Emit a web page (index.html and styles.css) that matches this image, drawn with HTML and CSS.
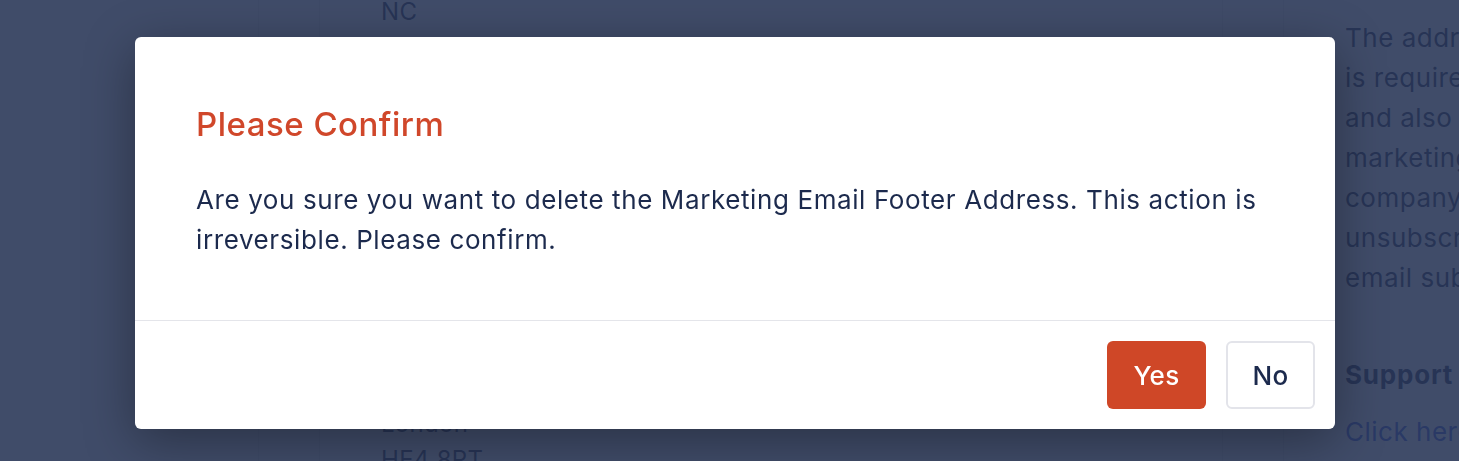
FILE: index.html
```html
<!DOCTYPE html>
<html lang="en">
<head>
<meta charset="utf-8">
<title>Please Confirm</title>
<link rel="stylesheet" href="styles.css">
</head>
<body>
<div class="page">
  <aside class="sidebar"></aside>
  <div class="gutter"></div>
  <main class="main">
    <div class="addr-top">NC</div>
    <div class="addr-bottom">
      <div>London</div>
      <div>HE4 8PT</div>
    </div>
  </main>
  <div class="gutter"></div>
  <aside class="help">
    <p class="help-text">
      <span>The address shown here</span>
      <span>is required by law</span>
      <span>and also appears in</span>
      <span>marketing emails as your</span>
      <span>company address with the</span>
      <span>unsubscribe link for your</span>
      <span>email subscribers.</span>
    </p>
    <h3 class="help-title">Support</h3>
    <a class="help-link" href="#">Click here to contact us</a>
  </aside>
</div>

<div class="backdrop"></div>

<div class="modal" role="dialog" aria-labelledby="modal-title">
  <div class="modal-body">
    <h2 class="modal-title" id="modal-title">Please Confirm</h2>
    <p class="modal-text">Are you sure you want to delete the Marketing Email Footer Address. This action is irreversible. Please confirm.</p>
  </div>
  <div class="modal-footer">
    <button class="btn btn-primary" type="button">Yes</button>
    <button class="btn btn-secondary" type="button">No</button>
  </div>
</div>
</body>
</html>
```

FILE: styles.css
```css
* {
  box-sizing: border-box;
}

html, body {
  margin: 0;
  padding: 0;
  height: 100%;
  overflow: hidden;
}

body {
  font-family: Inter, "Noto Sans", "Liberation Sans", sans-serif;
  color: #1c2a4d;
  background: #ffffff;
}

.page {
  display: grid;
  grid-template-columns: 258px 62px 902px 62px 1fr;
  height: 100vh;
}

.sidebar {
  background: #ffffff;
}

.gutter {
  background: #fafafb;
  border-left: 1px solid #e7e8ec;
  border-right: 1px solid #e7e8ec;
}

.main {
  padding: 0 61px;
  font-size: 24px;
  line-height: 36px;
  letter-spacing: 0.3px;
  color: #1c2a4d;
  display: flex;
  flex-direction: column;
}

.addr-top {
  margin-top: -6px;
}

.addr-bottom {
  margin-top: auto;
  margin-bottom: -17px;
}

.help {
  padding: 18px 0 0 61px;
  overflow: hidden;
  white-space: nowrap;
}

.help-text {
  margin: 0;
  font-size: 26px;
  line-height: 40px;
  letter-spacing: 0.5px;
  display: flex;
  flex-direction: column;
}

.help-title {
  margin: 57px 0 0;
  font-size: 26px;
  line-height: 40px;
  letter-spacing: 0.8px;
  font-weight: 700;
}

.help-link {
  display: block;
  margin-top: 17px;
  font-size: 26px;
  line-height: 40px;
  letter-spacing: 0.5px;
  color: #3556d4;
  text-decoration: none;
}

.backdrop {
  position: fixed;
  inset: 0;
  background: rgba(41, 54, 87, 0.89);
}

.modal {
  position: absolute;
  top: 37px;
  left: 135px;
  width: 1200px;
  background: #ffffff;
  border-radius: 6px;
  box-shadow: 0 12px 50px rgba(0, 0, 0, 0.35);
  overflow: hidden;
}

.modal-body {
  padding: 67px 60px 60px 61px;
}

.modal-title {
  margin: 0 0 36px;
  font-size: 33px;
  line-height: 40px;
  letter-spacing: 0.5px;
  font-weight: 500;
  color: #d0472a;
}

.modal-text {
  margin: 0;
  font-size: 26px;
  line-height: 40px;
  letter-spacing: 0.6px;
  color: #1c2a4d;
}

.modal-footer {
  border-top: 1px solid #e4e5ea;
  padding: 20px;
  display: flex;
  justify-content: flex-end;
  gap: 20px;
}

.btn {
  height: 68px;
  font-family: inherit;
  font-size: 26px;
  font-weight: 500;
  letter-spacing: 0.3px;
  border-radius: 6px;
  cursor: pointer;
}

.btn-primary {
  width: 99px;
  background: #cf4727;
  border: none;
  color: #ffffff;
}

.btn-secondary {
  width: 89px;
  background: #ffffff;
  border: 2px solid #e3e4ea;
  color: #1c2a4d;
}
```
